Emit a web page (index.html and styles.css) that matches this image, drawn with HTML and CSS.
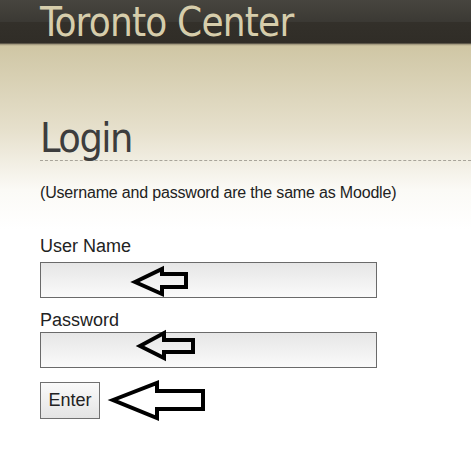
FILE: index.html
```html
<!DOCTYPE html>
<html lang="en">
<head>
    <meta charset="UTF-8">
    <title>Toronto Center - Login</title>
    <link rel="stylesheet" href="styles.css">
</head>
<body>
    <header class="site-header">
        <div class="site-title">Toronto Center</div>
    </header>

    <main class="content">
        <h1 class="page-title">Login</h1>
        <p class="note">(Username and password are the same as Moodle)</p>

        <form class="login-form" onsubmit="return false;">
            <label class="field-label user-label" for="username">User Name</label>
            <input class="field-input user-input" type="text" id="username">

            <label class="field-label pass-label" for="password">Password</label>
            <input class="field-input pass-input" type="password" id="password">

            <button class="enter-button" type="submit">Enter</button>
        </form>
    </main>

    <!-- hand drawn pointer arrows laid over the form -->
    <svg class="arrows" width="471" height="466" viewBox="0 0 471 466">
        <g fill="none" stroke="#000" stroke-width="4" stroke-linejoin="miter">
            <polygon points="135,282 162,269 162,274 186,274 186,287 162,287 162,294"/>
            <polygon points="140,346 164,333 164,340 193,340 193,352 164,352 164,358"/>
            <polygon points="113,400 157,383 157,391 203,391 203,409 157,409 157,418"/>
        </g>
    </svg>
</body>
</html>
```

FILE: styles.css
```css
* {
    margin: 0;
    padding: 0;
    box-sizing: border-box;
}

body {
    font-family: "Liberation Sans", Arial, sans-serif;
    color: #222;
    min-height: 466px;
    position: relative;
    background: linear-gradient(180deg, #cfc6a4 45px, #e6e0cc 130px, #fbfaf6 190px, #ffffff 230px);
}

.site-header {
    height: 46px;
    padding-left: 40px;
    background: linear-gradient(180deg, #47453f 0px, #3b3934 22px, #33302a 22px, #302d27 43px, #8c846e 44px, #bdb393 45px, #c9c09f 46px);
}

.site-title {
    font-family: "DejaVu Sans Condensed", "DejaVu Sans", Tahoma, sans-serif;
    font-stretch: condensed;
    font-size: 40px;
    line-height: 44px;
    letter-spacing: -0.8px;
    color: #d6cdab;
}

.content {
    padding: 70px 0 0 40px;
}

.page-title {
    font-family: "DejaVu Sans Condensed", "DejaVu Sans", Tahoma, sans-serif;
    font-stretch: condensed;
    font-weight: normal;
    font-size: 41px;
    line-height: 44px;
    letter-spacing: -1.5px;
    color: #3d3d3d;
    border-bottom: 1px dashed #a8a49a;
}

.note {
    font-size: 16px;
    line-height: 20px;
    letter-spacing: -0.18px;
    margin-top: 22px;
    color: #222;
}

.login-form {
    display: flex;
    flex-direction: column;
    align-items: flex-start;
    margin-top: 32px;
}

.field-label {
    font-size: 18px;
    line-height: 22px;
    color: #222;
}

.user-label {
    margin-bottom: 5px;
}

.pass-label {
    margin-bottom: 1px;
}

.field-input {
    width: 337px;
    height: 36px;
    border: 1px solid #6a6a6a;
    background: linear-gradient(180deg, #e6e6e6 0%, #fafafa 100%);
    font-size: 16px;
}

.user-input {
    margin-bottom: 11px;
}

.enter-button {
    width: 60px;
    height: 37px;
    margin-top: 14px;
    border: 1px solid #707070;
    background: linear-gradient(180deg, #fafafa 0%, #e4e4e4 100%);
    font-family: "Liberation Sans", Arial, sans-serif;
    font-size: 18px;
    color: #222;
}

.arrows {
    position: absolute;
    top: 0;
    left: 0;
    pointer-events: none;
}
```
